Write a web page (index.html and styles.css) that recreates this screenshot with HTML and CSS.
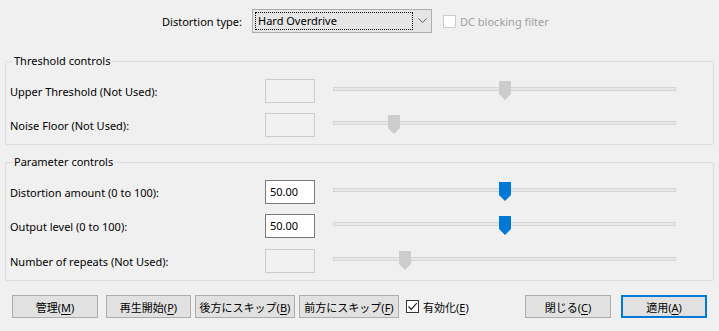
FILE: index.html
```html
<!DOCTYPE html>
<html>
<head>
<meta charset="utf-8">
<link rel="stylesheet" href="styles.css">
</head>
<body>
<div class="dialog">
  <div class="toprow">
    <span class="toplabel">Distortion type:</span>
    <div class="combo">
      <div class="combo-focus">Hard Overdrive</div>
      <svg class="chev" width="9" height="6" viewBox="0 0 9 6"><path d="M0.5 0.5 L4.5 4.5 L8.5 0.5" fill="none" stroke="#606060" stroke-width="1"/></svg>
    </div>
    <span class="cb disabled"></span>
    <span class="cb-text disabled-text">DC blocking filter</span>
  </div>

  <fieldset class="group g1">
    <legend>Threshold controls</legend>
    <div class="rows">
      <div class="row">
        <span class="lbl">Upper Threshold (Not Used):</span>
        <span class="tb disabled"></span>
        <div class="slider"><div class="track"></div>
          <svg class="thumb" style="left:166px" width="12" height="19" viewBox="0 0 12 19"><path d="M0 0 H12 V13 L6 19 L0 13 Z" fill="#cccccc"/></svg>
        </div>
      </div>
      <div class="row">
        <span class="lbl">Noise Floor (Not Used):</span>
        <span class="tb disabled"></span>
        <div class="slider"><div class="track"></div>
          <svg class="thumb" style="left:55px" width="12" height="19" viewBox="0 0 12 19"><path d="M0 0 H12 V13 L6 19 L0 13 Z" fill="#cccccc"/></svg>
        </div>
      </div>
    </div>
  </fieldset>

  <fieldset class="group g2">
    <legend>Parameter controls</legend>
    <div class="rows">
      <div class="row">
        <span class="lbl">Distortion amount (0 to 100):</span>
        <span class="tb">50.00</span>
        <div class="slider"><div class="track"></div>
          <svg class="thumb" style="left:166px" width="12" height="19" viewBox="0 0 12 19"><path d="M0 0 H12 V13 L6 19 L0 13 Z" fill="#0078d7"/></svg>
        </div>
      </div>
      <div class="row">
        <span class="lbl">Output level (0 to 100):</span>
        <span class="tb">50.00</span>
        <div class="slider"><div class="track"></div>
          <svg class="thumb" style="left:166px" width="12" height="19" viewBox="0 0 12 19"><path d="M0 0 H12 V13 L6 19 L0 13 Z" fill="#0078d7"/></svg>
        </div>
      </div>
      <div class="row row3">
        <span class="lbl">Number of repeats (Not Used):</span>
        <span class="tb disabled"></span>
        <div class="slider"><div class="track"></div>
          <svg class="thumb" style="left:66px" width="12" height="19" viewBox="0 0 12 19"><path d="M0 0 H12 V13 L6 19 L0 13 Z" fill="#cccccc"/></svg>
        </div>
      </div>
    </div>
  </fieldset>

  <div class="buttons">
    <button class="btn b1">管理(<u>M</u>)</button>
    <button class="btn b2">再生開始(<u>P</u>)</button>
    <button class="btn b3">後方にスキップ(<u>B</u>)</button>
    <button class="btn b4">前方にスキップ(<u>F</u>)</button>
    <span class="cb checked"><svg width="11" height="11" viewBox="0 0 11 11"><path d="M1.5 5.5 L4.2 8.3 L9.8 2.2" fill="none" stroke="#202020" stroke-width="1.2"/></svg></span>
    <span class="cb-text">有効化(<u>E</u>)</span>
    <span class="spacer"></span>
    <button class="btn b5">閉じる(<u>C</u>)</button>
    <button class="btn b6 default">適用(<u>A</u>)</button>
  </div>
</div>
</body>
</html>
```

FILE: styles.css
```css
html, body {
  margin: 0;
  padding: 0;
  background: #f0f0f0;
}
body {
  width: 719px;
  height: 331px;
  overflow: hidden;
  font-family: "Noto Sans", "Noto Sans CJK JP", sans-serif;
  font-size: 11px;
  color: #000;
}
.dialog {
  padding-top: 9px;
}
.toprow {
  display: flex;
  align-items: center;
  height: 24px;
}
.toplabel {
  width: 242px;
  text-align: right;
  margin-right: 10px;
}
.combo {
  box-sizing: border-box;
  width: 180px;
  height: 24px;
  background: #e5e5e5;
  border: 1px solid #adadad;
  display: flex;
  align-items: center;
  padding: 2px;
}
.combo-focus {
  box-sizing: border-box;
  width: 158px;
  height: 18px;
  border: 1px dotted #000;
  padding-left: 2px;
  line-height: 16px;
}
.chev {
  margin-left: 5px;
}
.cb {
  box-sizing: border-box;
  width: 13px;
  height: 13px;
  border: 1px solid #333;
  background: #fff;
  display: inline-flex;
  align-items: center;
  justify-content: center;
}
.toprow .cb {
  margin-left: 11px;
}
.cb.disabled {
  border-color: #cccccc;
}
.cb-text {
  margin-left: 4px;
  white-space: nowrap;
}
.disabled-text {
  color: #a0a0a0;
}
.group {
  margin: 20px 5px 0 5px;
  border: 1px solid #dcdcdc;
  border-radius: 2px;
  padding: 10px 4px 7px 4px;
}
.g2 {
  margin-top: 9px;
}
legend {
  padding: 0 2px;
  margin-left: 2px;
  line-height: 16px;
}
.rows {
  display: flex;
  flex-direction: column;
  gap: 10px;
}
.row {
  display: flex;
  align-items: center;
  height: 24px;
}
.row3 {
  margin-top: 1px;
}
.lbl {
  width: 255px;
}
.tb {
  box-sizing: border-box;
  width: 50px;
  height: 24px;
  border: 1px solid #7a7a7a;
  background: #fff;
  padding-left: 4px;
  line-height: 21px;
}
.tb.disabled {
  border-color: #cccccc;
  background: #f0f0f0;
}
.slider {
  position: relative;
  width: 343px;
  height: 24px;
  margin-left: 18px;
}
.track {
  position: absolute;
  left: 0;
  top: 8px;
  box-sizing: border-box;
  width: 343px;
  height: 4px;
  background: #e7e7e7;
  border: 1px solid #d6d6d6;
}
.thumb {
  position: absolute;
  top: 2px;
}
.buttons {
  display: flex;
  align-items: center;
  margin-top: 14px;
  padding-left: 12px;
  padding-right: 12px;
}
.btn {
  box-sizing: border-box;
  height: 23px;
  background: #e1e1e1;
  border: 1px solid #adadad;
  font-family: "Noto Sans", "Noto Sans CJK JP", sans-serif;
  font-size: 11px;
  padding: 0;
  color: #000;
  white-space: nowrap;
}
.b1 { width: 86px; }
.b2 { width: 85px; margin-left: 8px; }
.b3 { width: 100px; margin-left: 4px; }
.b4 { width: 100px; margin-left: 4px; }
.buttons .cb { margin-left: 7px; }
.spacer { flex: 1; }
.b5 { width: 86px; }
.b6 { width: 86px; margin-left: 10px; }
.default {
  border: 2px solid #0078d7;
}
u {
  text-decoration-thickness: 1px;
  text-underline-offset: 2px;
}
```
